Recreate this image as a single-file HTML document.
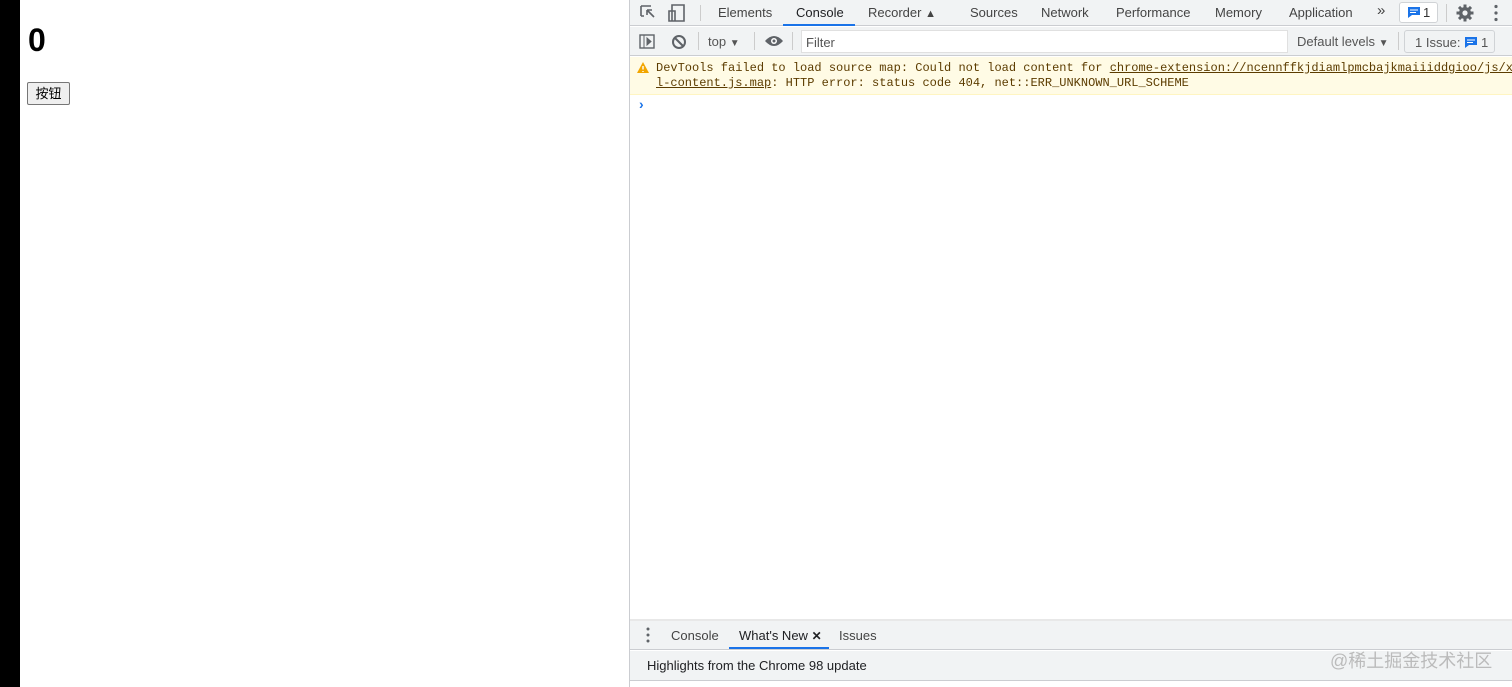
<!DOCTYPE html>
<html><head><meta charset="utf-8"><style>
*{margin:0;padding:0;box-sizing:border-box}
body{width:1512px;height:687px;overflow:hidden;position:relative;background:#fff;font-family:"Liberation Sans","Noto Sans CJK SC",sans-serif}
.a{position:absolute}
.t{font-size:13px;color:#333;white-space:nowrap}
.mono{font-family:"Liberation Mono",monospace;font-size:12px;color:#5c3c00;white-space:nowrap}
</style></head><body>
<div class="a" style="left:0;top:0;width:20px;height:687px;background:#000"></div>
<div class="a" style="left:28px;top:22px;font-size:32px;font-weight:bold">0</div>
<div class="a" style="left:27px;top:82px;width:43px;height:23px;border:1px solid #767676;border-radius:2px;background:#efefef;font-size:13px;text-align:center;line-height:21px">按钮</div>
<div class="a" style="left:629px;top:0;width:1px;height:687px;background:#cbcdd1"></div>
<!-- tab bar -->
<div class="a" style="left:630px;top:0;width:882px;height:26px;background:#f1f3f4;border-bottom:1px solid #cbcdd1"></div>
<svg class="a" style="left:640px;top:4px" width="50" height="18"><path d="M1 2h10M1 2v10M1 12h3M7 6l7 7M7 6h5M7 6v5" stroke="#5f6368" stroke-width="1.6" fill="none"/><path d="M32 1h12v16h-12zM29 7h6v10h-6z" stroke="#5f6368" stroke-width="1.6" fill="none"/></svg>
<div class="a" style="left:700px;top:5px;width:1px;height:16px;background:#ccc"></div>
<div class="a t" style="left:718px;top:5px;color:#444">Elements</div>
<div class="a t" style="left:796px;top:5px;color:#202124">Console</div>
<div class="a" style="left:783px;top:24px;width:72px;height:2px;background:#1a73e8"></div>
<div class="a t" style="left:868px;top:5px;color:#444">Recorder <span style="font-size:11px">▲</span></div>
<div class="a t" style="left:970px;top:5px;color:#444">Sources</div>
<div class="a t" style="left:1041px;top:5px;color:#444">Network</div>
<div class="a t" style="left:1116px;top:5px;color:#444">Performance</div>
<div class="a t" style="left:1215px;top:5px;color:#444">Memory</div>
<div class="a t" style="left:1289px;top:5px;color:#444">Application</div>
<div class="a t" style="left:1377px;top:2px;color:#444;font-size:15px">»</div>
<div class="a" style="left:1399px;top:2px;width:39px;height:21px;border:1px solid #d0d3d6;border-radius:3px;background:#fff"></div>
<svg class="a" style="left:1407px;top:6px" width="14" height="13"><path d="M1 1h12v8h-8l-4 3z" fill="#1a73e8"/><path d="M3 4h8M3 6.5h6" stroke="#fff"/></svg>
<div class="a t" style="left:1423px;top:5px">1</div>
<div class="a" style="left:1446px;top:4px;width:1px;height:18px;background:#ccc"></div>
<svg class="a" style="left:1456px;top:4px" width="18" height="18" viewBox="0 0 18 18"><g fill="#5f6368"><circle cx="9" cy="9" r="6"/><rect x="7.5" y="0.5" width="3" height="17"/><rect x="0.5" y="7.5" width="17" height="3"/><rect x="7.5" y="0.5" width="3" height="17" transform="rotate(45 9 9)"/><rect x="7.5" y="0.5" width="3" height="17" transform="rotate(-45 9 9)"/></g><circle cx="9" cy="9" r="2.6" fill="#f1f3f4"/></svg>
<svg class="a" style="left:1494px;top:4px" width="4" height="18"><circle cx="2" cy="2.5" r="1.6" fill="#5f6368"/><circle cx="2" cy="9" r="1.6" fill="#5f6368"/><circle cx="2" cy="15.5" r="1.6" fill="#5f6368"/></svg>
<!-- toolbar -->
<div class="a" style="left:630px;top:27px;width:882px;height:29px;background:#f1f3f4;border-bottom:1px solid #cbcdd1"></div>
<svg class="a" style="left:639px;top:34px" width="50" height="16"><rect x="1" y="1" width="14" height="13" stroke="#5f6368" fill="none" stroke-width="1.4"/><path d="M5 1v13M8 4l4 3.5-4 3.5z" stroke="#5f6368" fill="#5f6368" stroke-width="1"/><circle cx="40" cy="8" r="6" stroke="#5f6368" fill="none" stroke-width="2"/><path d="M36 4l8 8" stroke="#5f6368" stroke-width="2"/></svg>
<div class="a" style="left:698px;top:32px;width:1px;height:18px;background:#ccc"></div>
<div class="a t" style="left:708px;top:34px;color:#555">top <span style="font-size:10px">▼</span></div>
<div class="a" style="left:754px;top:32px;width:1px;height:18px;background:#ccc"></div>
<svg class="a" style="left:764px;top:35px" width="20" height="12"><path d="M1 6q9-10 18 0q-9 10-18 0z" fill="#5f6368"/><circle cx="10" cy="6" r="3" fill="#fff"/><circle cx="10" cy="6" r="1.5" fill="#5f6368"/></svg>
<div class="a" style="left:792px;top:32px;width:1px;height:18px;background:#ccc"></div>
<div class="a" style="left:801px;top:30px;width:487px;height:23px;background:#fff;border:1px solid #e0e0e0"></div>
<div class="a t" style="left:806px;top:35px;color:#555">Filter</div>
<div class="a t" style="left:1297px;top:34px;color:#555">Default levels <span style="font-size:10px">▼</span></div>
<div class="a" style="left:1398px;top:32px;width:1px;height:18px;background:#ccc"></div>
<div class="a" style="left:1404px;top:30px;width:91px;height:23px;border:1px solid #d0d3d6;border-radius:3px"></div>
<div class="a t" style="left:1415px;top:35px;color:#555">1 Issue:</div>
<svg class="a" style="left:1464px;top:36px" width="14" height="13"><path d="M1 1h12v8h-8l-4 3z" fill="#1a73e8"/><path d="M3 4h8M3 6.5h6" stroke="#fff"/></svg>
<div class="a t" style="left:1481px;top:35px;color:#555">1</div>
<!-- warning -->
<div class="a" style="left:630px;top:57px;width:882px;height:38px;background:#fffbe5;border-bottom:1px solid #fff5c2"></div>
<svg class="a" style="left:637px;top:62px" width="12" height="11"><path d="M6 0l6 11h-12z" fill="#f2a600"/><path d="M6 4v3.5M6 9v1" stroke="#fff" stroke-width="1.4"/></svg>
<div class="a mono" style="left:656px;top:61px">DevTools failed to load source map: Could not load content for <u>chrome-extension://ncennffkjdiamlpmcbajkmaiiiddgioo/js/x</u></div>
<div class="a mono" style="left:656px;top:76px"><u>l-content.js.map</u>: HTTP error: status code 404, net::ERR_UNKNOWN_URL_SCHEME</div>
<div class="a" style="left:639px;top:96px;font-size:14px;color:#1a73e8;font-weight:bold">›</div>
<!-- drawer -->
<div class="a" style="left:630px;top:619px;width:882px;height:2px;background:#e8e8e8"></div>
<div class="a" style="left:630px;top:621px;width:882px;height:29px;background:#f1f3f4;border-bottom:1px solid #cbcdd1"></div>
<svg class="a" style="left:646px;top:627px" width="4" height="16"><circle cx="2" cy="2" r="1.5" fill="#5f6368"/><circle cx="2" cy="8" r="1.5" fill="#5f6368"/><circle cx="2" cy="14" r="1.5" fill="#5f6368"/></svg>
<div class="a t" style="left:671px;top:628px;color:#444">Console</div>
<div class="a t" style="left:739px;top:628px;color:#202124">What's New <b style="font-size:12px">✕</b></div>
<div class="a" style="left:729px;top:647px;width:100px;height:2px;background:#1a73e8"></div>
<div class="a t" style="left:839px;top:628px;color:#444">Issues</div>
<div class="a" style="left:630px;top:651px;width:882px;height:30px;background:#f1f3f4;border-bottom:1px solid #cbcdd1"></div>
<div class="a t" style="left:647px;top:658px;color:#202124">Highlights from the Chrome 98 update</div>
<div class="a" style="left:1330px;top:647px;font-size:18px;color:#bbb;white-space:nowrap">@稀土掘金技术社区</div>
</body></html>
